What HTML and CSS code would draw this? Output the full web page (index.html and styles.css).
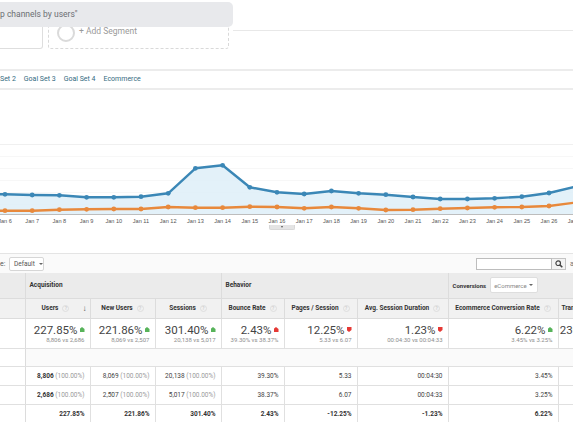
FILE: index.html
```html
<!DOCTYPE html>
<html>
<head>
<meta charset="utf-8">
<link rel="stylesheet" href="styles.css">
</head>
<body>
<div class="page">
  <div class="segments">
    <div class="seg-row">
      <div class="seg-box"></div>
      <div class="seg-add"><span class="seg-circle"></span><span class="seg-add-text">+ Add Segment</span></div>
      <div class="seg-rule"></div>
    </div>
    <div class="search-pop">p channels by users"</div>
  </div>

  <nav class="tabs"><span>Set 2</span><span>Goal Set 3</span><span>Goal Set 4</span><span>Ecommerce</span></nav>

  <div class="chart">
    <svg width="573" height="135" viewBox="0 0 573 135">
      <g stroke-width="1">
        <line x1="0" y1="54.5" x2="573" y2="54.5" stroke="#f0f0f0"/>
        <line x1="0" y1="66.5" x2="573" y2="66.5" stroke="#f7f7f7"/>
        <line x1="0" y1="78.5" x2="573" y2="78.5" stroke="#f7f7f7"/>
        <line x1="0" y1="90.5" x2="573" y2="90.5" stroke="#f7f7f7"/>
        <line x1="0" y1="102.5" x2="573" y2="102.5" stroke="#f7f7f7"/>
        <line x1="0" y1="114.5" x2="573" y2="114.5" stroke="#f7f7f7"/>
      </g>
      <polygon fill="#deeef8" fill-opacity="0.85" points="-22.2,124 -22.2,104 5,104.3 32.2,105 59.4,105.3 86.6,107.3 113.8,107.3 141,106.7 168.2,103.3 195.4,78.3 222.6,75.3 249.8,97.3 277,102.3 304.2,104 331.4,101 358.6,103.3 385.8,104.7 413,107 440.2,109 467.4,109 494.6,108.3 521.8,106.7 549,103 576.2,96.5 576.2,124"/>
      <line x1="0" y1="124.5" x2="573" y2="124.5" stroke="#bdbdbd"/>
      <polyline fill="none" stroke="#3b87b6" stroke-width="2.4" stroke-linejoin="round" points="-22.2,104 5,104.3 32.2,105 59.4,105.3 86.6,107.3 113.8,107.3 141,106.7 168.2,103.3 195.4,78.3 222.6,75.3 249.8,97.3 277,102.3 304.2,104 331.4,101 358.6,103.3 385.8,104.7 413,107 440.2,109 467.4,109 494.6,108.3 521.8,106.7 549,103 576.2,96.5"/>
      <polyline fill="none" stroke="#e8893c" stroke-width="2.4" stroke-linejoin="round" points="-22.2,121 5,120.7 32.2,120.7 59.4,119.7 86.6,119.3 113.8,119 141,119 168.2,117 195.4,117.7 222.6,117.7 249.8,116.7 277,117 304.2,118.3 331.4,117 358.6,118.3 385.8,120 413,119.7 440.2,118.7 467.4,118 494.6,117.3 521.8,117 549,116 576.2,112.5"/>
      <g fill="#3b87b6">
        <circle cx="5" cy="104.3" r="2.4"/><circle cx="32.2" cy="105" r="2.4"/><circle cx="59.4" cy="105.3" r="2.4"/><circle cx="86.6" cy="107.3" r="2.4"/><circle cx="113.8" cy="107.3" r="2.4"/><circle cx="141" cy="106.7" r="2.4"/><circle cx="168.2" cy="103.3" r="2.4"/><circle cx="195.4" cy="78.3" r="2.4"/><circle cx="222.6" cy="75.3" r="2.4"/><circle cx="249.8" cy="97.3" r="2.4"/><circle cx="277" cy="102.3" r="2.4"/><circle cx="304.2" cy="104" r="2.4"/><circle cx="331.4" cy="101" r="2.4"/><circle cx="358.6" cy="103.3" r="2.4"/><circle cx="385.8" cy="104.7" r="2.4"/><circle cx="413" cy="107" r="2.4"/><circle cx="440.2" cy="109" r="2.4"/><circle cx="467.4" cy="109" r="2.4"/><circle cx="494.6" cy="108.3" r="2.4"/><circle cx="521.8" cy="106.7" r="2.4"/><circle cx="549" cy="103" r="2.4"/>
      </g>
      <g fill="#e8893c">
        <circle cx="5" cy="120.7" r="2.4"/><circle cx="32.2" cy="120.7" r="2.4"/><circle cx="59.4" cy="119.7" r="2.4"/><circle cx="86.6" cy="119.3" r="2.4"/><circle cx="113.8" cy="119" r="2.4"/><circle cx="141" cy="119" r="2.4"/><circle cx="168.2" cy="117" r="2.4"/><circle cx="195.4" cy="117.7" r="2.4"/><circle cx="222.6" cy="117.7" r="2.4"/><circle cx="249.8" cy="116.7" r="2.4"/><circle cx="277" cy="117" r="2.4"/><circle cx="304.2" cy="118.3" r="2.4"/><circle cx="331.4" cy="117" r="2.4"/><circle cx="358.6" cy="118.3" r="2.4"/><circle cx="385.8" cy="120" r="2.4"/><circle cx="413" cy="119.7" r="2.4"/><circle cx="440.2" cy="118.7" r="2.4"/><circle cx="467.4" cy="118" r="2.4"/><circle cx="494.6" cy="117.3" r="2.4"/><circle cx="521.8" cy="117" r="2.4"/><circle cx="549" cy="116" r="2.4"/>
      </g>
      <g class="axis-labels" text-anchor="middle">
        <text x="5" y="132.5">Jan 6</text><text x="32.2" y="132.5">Jan 7</text><text x="59.4" y="132.5">Jan 8</text><text x="86.6" y="132.5">Jan 9</text><text x="113.8" y="132.5">Jan 10</text><text x="141" y="132.5">Jan 11</text><text x="168.2" y="132.5">Jan 12</text><text x="195.4" y="132.5">Jan 13</text><text x="222.6" y="132.5">Jan 14</text><text x="249.8" y="132.5">Jan 15</text><text x="277" y="132.5">Jan 16</text><text x="304.2" y="132.5">Jan 17</text><text x="331.4" y="132.5">Jan 18</text><text x="358.6" y="132.5">Jan 19</text><text x="385.8" y="132.5">Jan 20</text><text x="413" y="132.5">Jan 21</text><text x="440.2" y="132.5">Jan 22</text><text x="467.4" y="132.5">Jan 23</text><text x="494.6" y="132.5">Jan 24</text><text x="521.8" y="132.5">Jan 25</text><text x="549" y="132.5">Jan 26</text><text x="576.2" y="132.5">Jan 27</text>
      </g>
    </svg>
  </div>
  <div class="handle-row"><div class="handle"><span class="handle-caret"></span></div></div>

  <div class="toolbar">
    <span class="tb-label">e:</span>
    <div class="tb-select">Default<span class="caret"></span></div>
    <div class="tb-search">
      <div class="tb-input"></div>
      <div class="tb-btn">
        <svg width="8" height="8" viewBox="0 0 8 8"><circle cx="3.2" cy="3.2" r="2.3" fill="none" stroke="#444" stroke-width="1.2"/><line x1="4.9" y1="4.9" x2="7.3" y2="7.3" stroke="#444" stroke-width="1.5"/></svg>
      </div>
    </div>
    <span class="tb-more">a</span>
  </div>

  <table class="report">
    <colgroup>
      <col class="c0"><col class="c1"><col class="c2"><col class="c3"><col class="c4"><col class="c5"><col class="c6"><col class="c7"><col class="c8">
    </colgroup>
    <tr class="r-group">
      <th class="dim"></th>
      <th colspan="3">Acquisition</th>
      <th colspan="3">Behavior</th>
      <th colspan="2"><div class="conv"><span class="conv-label">Conversions</span><div class="conv-select">eCommerce<span class="caret"></span></div></div></th>
    </tr>
    <tr class="r-head">
      <th class="dim"></th>
      <th class="sortable"><div class="th-in"><span class="th-label">Users<span class="help">?</span></span><span class="sort-arrow">↓</span></div></th>
      <th><div class="th-in"><span class="th-label">New Users<span class="help">?</span></span></div></th>
      <th><div class="th-in"><span class="th-label">Sessions<span class="help">?</span></span></div></th>
      <th><div class="th-in"><span class="th-label">Bounce Rate<span class="help">?</span></span></div></th>
      <th><div class="th-in"><span class="th-label">Pages / Session<span class="help">?</span></span></div></th>
      <th><div class="th-in"><span class="th-label">Avg. Session Duration<span class="help">?</span></span></div></th>
      <th><div class="th-in"><span class="th-label">Ecommerce Conversion Rate<span class="help">?</span></span></div></th>
      <th class="last"><div class="th-in"><span class="th-label">Transactions<span class="help">?</span></span></div></th>
    </tr>
    <tr class="r-sum">
      <td class="dim"></td>
      <td><div class="big">227.85%<i class="mk up"></i></div><div class="sub">8,806 vs 2,686</div></td>
      <td><div class="big">221.86%<i class="mk up"></i></div><div class="sub">8,069 vs 2,507</div></td>
      <td><div class="big">301.40%<i class="mk up"></i></div><div class="sub">20,138 vs 5,017</div></td>
      <td><div class="big">2.43%<i class="mk bad-up"></i></div><div class="sub">39.30% vs 38.37%</div></td>
      <td><div class="big">12.25%<i class="mk bad-down"></i></div><div class="sub">5.33 vs 6.07</div></td>
      <td><div class="big">1.23%<i class="mk bad-down"></i></div><div class="sub">00:04:30 vs 00:04:33</div></td>
      <td><div class="big">6.22%<i class="mk up"></i></div><div class="sub">3.45% vs 3.25%</div></td>
      <td class="last"><div class="big">230.00%<i class="mk up"></i></div><div class="sub">33 vs 10</div></td>
    </tr>
    <tr class="r-blank">
      <td class="dim"></td>
      <td colspan="8" class="blank"></td>
    </tr>
    <tr class="r-data">
      <td class="dim"></td>
      <td><b>8,806</b> <span class="pct">(100.00%)</span></td>
      <td>8,069 <span class="pct">(100.00%)</span></td>
      <td>20,138 <span class="pct">(100.00%)</span></td>
      <td>39.30%</td>
      <td>5.33</td>
      <td>00:04:30</td>
      <td>3.45%</td>
      <td>33 <span class="pct">(100.00%)</span></td>
    </tr>
    <tr class="r-data">
      <td class="dim"></td>
      <td><b>2,686</b> <span class="pct">(100.00%)</span></td>
      <td>2,507 <span class="pct">(100.00%)</span></td>
      <td>5,017 <span class="pct">(100.00%)</span></td>
      <td>38.37%</td>
      <td>6.07</td>
      <td>00:04:33</td>
      <td>3.25%</td>
      <td>10 <span class="pct">(100.00%)</span></td>
    </tr>
    <tr class="r-data r-change">
      <td class="dim"></td>
      <td>227.85%</td>
      <td>221.86%</td>
      <td>301.40%</td>
      <td>2.43%</td>
      <td>-12.25%</td>
      <td>-1.23%</td>
      <td>6.22%</td>
      <td>230.00%</td>
    </tr>
  </table>
</div>
</body>
</html>
```

FILE: styles.css
```css
* { box-sizing: border-box; margin: 0; padding: 0; }
body {
  margin: 0;
  width: 573px;
  height: 422px;
  overflow: hidden;
  background: #fff;
  font-family: Roboto, "Liberation Sans", sans-serif;
  color: #333;
}
.page { width: 573px; }

/* segments */
.segments { position: relative; height: 69px; }
.seg-row { display: flex; align-items: flex-start; height: 69px; }
.seg-box {
  flex: 0 0 43px; margin-top: 14px; height: 35px;
  border: 1px solid #dedede; border-left: 0; border-radius: 0 3px 3px 0;
}
.seg-add {
  flex: 0 0 181px; margin-top: 14px; margin-left: 5px; height: 35px;
  border: 1px dashed #d9d9d9; border-radius: 3px;
  display: flex; align-items: flex-start; padding: 9px 0 0 8px;
}
.seg-circle { flex: 0 0 18px; height: 18px; border: 2px solid #dadada; border-radius: 50%; }
.seg-add-text { margin-left: 4px; margin-top: 2px; font-size: 8.5px; line-height: 10px; color: #9a9a9a; }
.seg-rule { flex: 1; margin-left: 4px; height: 31px; border-bottom: 1px solid #e8e8e8; }
.search-pop {
  position: absolute; left: 0; top: 2px; width: 233px; height: 25px;
  background: #e8e9ec; border-radius: 0 5px 5px 0;
  font-size: 8.5px; line-height: 24px; color: #6b6e73;
}

/* tabs */
.tabs {
  display: flex; gap: 8px; height: 21px;
  border-top: 2px solid #ececec; border-bottom: 2px solid #ececec;
  font-size: 7px; line-height: 17px; color: #336b80;
}

/* chart */
.chart svg { display: block; }
.axis-labels { font-family: "Liberation Sans", Arial, sans-serif; font-size: 5.6px; fill: #555; }
.handle-row { height: 28px; }
.handle {
  margin-left: 269px; width: 26px; height: 5px; background: #e4e4e4;
  border: 1px solid #d8d8d8; border-top: 0;
  border-radius: 0 0 2px 2px; display: flex; justify-content: center; align-items: center;
}
.handle-caret { width: 0; height: 0; border-left: 1.5px solid transparent; border-right: 1.5px solid transparent; border-top: 2px solid #555; }

/* toolbar */
.toolbar {
  display: flex; align-items: center; height: 20px;
  border-top: 1px solid #e4e4e4; background: #fafafa;
  font-size: 7px; color: #555;
}
.tb-label { width: 9px; }
.tb-select {
  flex: 0 0 34px; height: 14px; background: #fff; border: 1px solid #d6d6d6; border-radius: 2px;
  display: flex; align-items: center; padding-left: 4px; font-size: 6.5px; color: #555; gap: 4px;
}
.caret { width: 0; height: 0; border-left: 2px solid transparent; border-right: 2px solid transparent; border-top: 2.5px solid #666; }
.tb-search { margin-left: auto; display: flex; }
.tb-input { width: 76px; height: 12px; background: #fff; border: 1px solid #bdbdbd; }
.tb-btn {
  width: 14px; height: 12px; background: #f3f3f3; border: 1px solid #c4c4c4; border-left: 0;
  display: flex; align-items: center; justify-content: center;
}
.tb-more { flex: 0 0 7px; padding-left: 4px; color: #777; overflow: hidden; }

/* table */
.report { border-collapse: collapse; table-layout: fixed; width: 620px; font-size: 6.5px; color: #444; }
.c0 { width: 25px; } .c1 { width: 65px; } .c2 { width: 65px; } .c3 { width: 66px; }
.c4 { width: 63px; } .c5 { width: 73px; } .c6 { width: 91px; } .c7 { width: 110px; } .c8 { width: 62px; }
.report th, .report td { padding: 0; border: 1px solid #e0e0e0; }
.report tr > :first-child { border-left: 0; }
.r-group th {
  height: 25px; background: #ebebeb; text-align: left; padding-left: 4px;
  font-weight: 700; color: #333; border-color: #dcdcdc; border-top: 0;
}
.conv { display: flex; align-items: center; gap: 4px; }
.conv-label { font-size: 6px; }
.conv-select {
  flex: 0 0 48px; height: 16px; background: #fff; border: 1px solid #dedede; border-radius: 2px;
  display: flex; align-items: center; justify-content: space-between; padding: 0 4px 0 3px;
  font-weight: 400; font-size: 6px; color: #888;
}
.r-head th { height: 20px; background: #f1f1f1; font-weight: 700; color: #333; border-color: #dcdcdc; }
.th-in { display: flex; align-items: center; justify-content: center; padding: 0 3px; white-space: nowrap; }
.th-label { display: flex; align-items: center; margin: 0 auto; }
.r-head th.last .th-in { justify-content: flex-start; }
.r-head th.last .th-label { margin: 0; }
.sort-arrow { font-size: 8px; font-weight: 400; color: #555; }
.help {
  display: inline-flex; align-items: center; justify-content: center;
  width: 7px; height: 7px; margin-left: 4px; border-radius: 50%;
  border: 1px solid #dedede; color: #cfcfcf; font-size: 4.5px; font-weight: 700;
}
.report th.dim { background: #ebebeb; }
.r-head th.dim { background: #f1f1f1; }

.r-sum td { height: 30px; text-align: right; padding-right: 5px; vertical-align: middle; }
.r-sum td.last { padding-right: 9px; }
.big { font-size: 11.5px; line-height: 12px; color: #444; display: flex; align-items: center; justify-content: flex-end; }
.sub { font-size: 6px; line-height: 7px; color: #8d8d8d; }
.mk { display: inline-block; width: 5px; height: 5px; margin-left: 2px; }
.mk.up { background: #57b35a; clip-path: polygon(50% 0, 100% 40%, 100% 100%, 0 100%, 0 40%); }
.mk.bad-up { background: #e53935; clip-path: polygon(50% 0, 100% 40%, 100% 100%, 0 100%, 0 40%); }
.mk.bad-down { background: #e53935; clip-path: polygon(0 0, 100% 0, 100% 60%, 50% 100%, 0 60%); }

.r-blank td { height: 18px; }
.r-blank td.blank { background: #fafafa; }
.r-data td { height: 19px; text-align: right; padding-right: 5px; }
.r-data b { font-weight: 700; color: #333; }
.pct { color: #9a9a9a; }
.r-change td { font-weight: 700; color: #333; }
.report td.dim { border-right-color: #dcdcdc; }
```
